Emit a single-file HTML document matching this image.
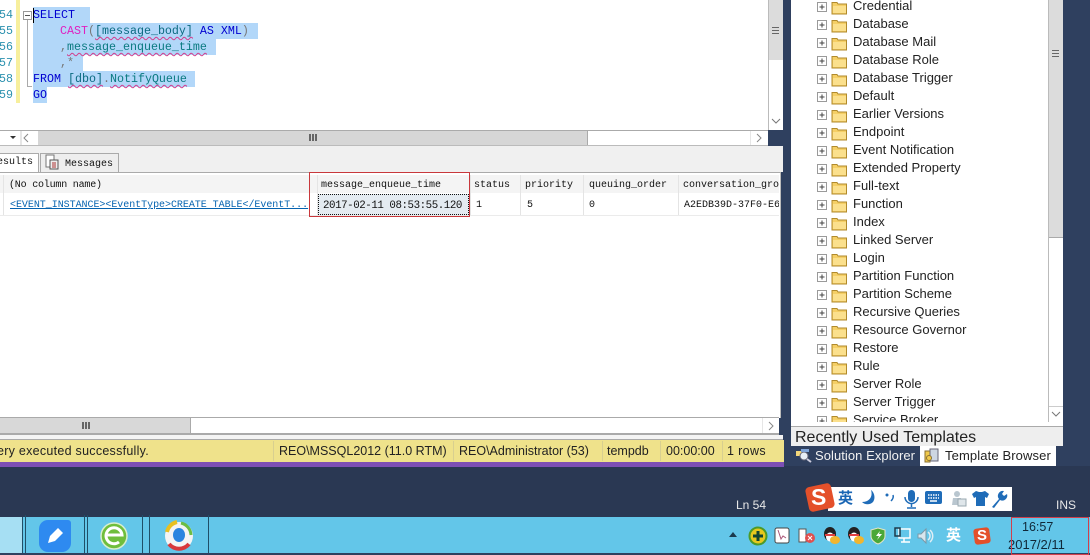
<!DOCTYPE html>
<html><head><meta charset="utf-8">
<style>
html,body{margin:0;padding:0}
body{width:1090px;height:553px;overflow:hidden;position:relative;background:#2f405f;font-family:"Liberation Sans","Noto Sans CJK SC",sans-serif}
.a{position:absolute}
.t{position:absolute;white-space:pre}
.m{font-family:"Liberation Mono",monospace;font-size:11.67px;line-height:16px}
.g{font-family:"Liberation Mono",monospace;font-size:10px;line-height:14px;color:#111}
.sel{position:absolute;background:#b2d7f9}
.r{position:absolute;left:817px;height:18px;width:225px}
.r svg{position:absolute;left:0;top:0}
.r span{position:absolute;left:36px;top:-2px;font-size:13px;line-height:18px;color:#222;white-space:pre}
.st{position:absolute;top:443px;font-size:12.5px;line-height:16px;color:#222;white-space:pre}
.sep{position:absolute;top:441px;width:1px;height:20px;background:#d8cf90}
.wav{text-decoration:underline wavy #d23c8c 1px;text-underline-offset:2px}
</style></head><body>
<svg width="0" height="0" style="position:absolute"><defs>
<g id="f"><rect x="0.5" y="3.5" width="9" height="9" fill="#fff" stroke="#9a9a9a"/><path d="M2.5 8h5M5 5.500v5" stroke="#444"/><path d="M15 3.500h5l1 1.500h8.500v10h-14.500z" fill="#f5cf66" stroke="#b08a2c"/><path d="M16 7h13v7h-13z" fill="#fbe08d"/></g>
</defs></svg>

<!-- gradient background -->
<div class="a" style="left:0;top:466px;width:1090px;height:51px;background:#2a3853"></div>

<!-- editor -->
<div class="a" style="left:0;top:0;width:768px;height:130px;background:#fff"></div>
<div class="a" style="left:16px;top:0;width:4px;height:103px;background:#f7ef9d"></div>
<div class="t m" style="left:-1px;top:7px;color:#2b91af;line-height:16px">54
55
56
57
58
59</div>
<div class="a" style="left:23px;top:11px;width:7px;height:7px;border:1px solid #999;background:#fff"></div>
<div class="a" style="left:25px;top:15px;width:5px;height:1px;background:#555"></div>
<div class="a" style="left:27px;top:20px;width:4px;height:66px;border-left:1px solid #aaa;border-bottom:1px solid #aaa"></div>
<div class="sel" style="left:33px;top:7px;width:57px;height:16px"></div>
<div class="sel" style="left:33px;top:23px;width:225px;height:16px"></div>
<div class="sel" style="left:33px;top:39px;width:183px;height:16px"></div>
<div class="sel" style="left:33px;top:55px;width:50px;height:16px"></div>
<div class="sel" style="left:33px;top:71px;width:162px;height:16px"></div>
<div class="sel" style="left:33px;top:87px;width:14px;height:16px"></div>
<div class="a" style="left:33px;top:8px;width:1px;height:15px;background:#000"></div>
<div class="t m" style="left:33px;top:7px;color:#0000d0">SELECT</div>
<div class="t m" style="left:60px;top:23px;color:#777"><span style="color:#e020c0">CAST</span>(<span class="wav" style="color:#0a6a80">[message_body]</span> <span style="color:#0000d0">AS XML</span>)</div>
<div class="t m" style="left:60px;top:39px;color:#777">,<span class="wav" style="color:#0a7a80">message_enqueue_time</span></div>
<div class="t m" style="left:60px;top:55px;color:#777">,*</div>
<div class="t m" style="left:33px;top:71px;color:#777"><span style="color:#0000d0">FROM</span> <span class="wav" style="color:#0a6a80">[dbo]</span>.<span class="wav" style="color:#0a7a80">NotifyQueue</span></div>
<div class="t m" style="left:33px;top:87px;color:#0000d0">GO</div>

<!-- editor v scrollbar -->
<div class="a" style="left:768px;top:0;width:15px;height:130px;background:#fff;border-left:1px solid #bbb;box-sizing:border-box"></div>
<div class="a" style="left:769px;top:0;width:14px;height:60px;background:#dcdcdc"></div>
<div class="a" style="left:772px;top:27px;width:7px;height:7px;border-top:1px solid #666;border-bottom:1px solid #666;box-sizing:border-box"></div>
<div class="a" style="left:772px;top:30px;width:7px;height:1px;background:#666"></div>
<svg class="a" style="left:769px;top:113px" width="14" height="16"><path d="M3 6l4 4 4-4" fill="none" stroke="#777"/></svg>

<!-- editor h scrollbar -->
<div class="a" style="left:0;top:130px;width:768px;height:16px;background:#fff;border-top:1px solid #aaa;border-bottom:1px solid #bbb;box-sizing:border-box"></div>
<div class="a" style="left:38px;top:131px;width:549px;height:14px;background:#d6d6d6;border-right:1px solid #aaa"></div>
<div class="a" style="left:309px;top:134px;width:8px;height:7px;background:repeating-linear-gradient(90deg,#666 0 2px,#d6d6d6 2px 3px)"></div>
<svg class="a" style="left:10px;top:131px" width="26" height="14"><path d="M0 5h6l-3 3z" fill="#333"/><path d="M18 3l-4 4 4 4" fill="none" stroke="#888"/><path d="M11 0v14" stroke="#ccc"/></svg>
<svg class="a" style="left:750px;top:131px" width="17" height="14"><path d="M0 0v14" stroke="#ccc"/><path d="M7 3l4 4-4 4" fill="none" stroke="#888"/></svg>

<!-- results toolbar band -->
<div class="a" style="left:0;top:146px;width:783px;height:26px;background:#f0f0f0"></div>
<div class="a" style="left:0;top:153px;width:39px;height:20px;background:#fff;border:1px solid #aaa;border-bottom:none;border-left:none;box-sizing:border-box"></div>
<div class="t g" style="left:-3px;top:156px;font-size:10px;color:#111">esults</div>
<div class="a" style="left:40px;top:153px;width:79px;height:19px;background:#eee;border:1px solid #aaa;border-bottom:none;box-sizing:border-box"></div>
<svg class="a" style="left:44px;top:154px" width="16" height="16"><path d="M2 1h8v12h-8z" fill="#fff" stroke="#777"/><path d="M6 6h8v9h-8z" fill="#eee" stroke="#555"/><path d="M8 9h4M8 11h4M8 13h4" stroke="#a33"/></svg>
<div class="t g" style="left:65px;top:158px">Messages</div>

<!-- grid -->
<div class="a" style="left:0;top:172px;width:781px;height:246px;background:#fff;border-top:1px solid #aaa;border-right:1px solid #bbb;box-sizing:border-box"></div>
<div class="a" style="left:0;top:175px;width:779px;height:18px;background:#f4f4f4"></div>
<div class="a" style="left:0;top:215px;width:779px;height:1px;background:#ebebeb"></div>
<div class="a" style="left:3px;top:175px;width:1px;height:40px;background:#e4e4e4"></div>
<div class="a" style="left:317px;top:175px;width:1px;height:40px;background:#e4e4e4"></div>
<div class="a" style="left:470px;top:175px;width:1px;height:40px;background:#e4e4e4"></div>
<div class="a" style="left:520px;top:175px;width:1px;height:40px;background:#e4e4e4"></div>
<div class="a" style="left:583px;top:175px;width:1px;height:40px;background:#e4e4e4"></div>
<div class="a" style="left:678px;top:175px;width:1px;height:40px;background:#e4e4e4"></div>
<div class="t g" style="left:9px;top:179px;letter-spacing:-.2px">(No column name)</div>
<div class="t g" style="left:321px;top:179px">message_enqueue_time</div>
<div class="t g" style="left:474px;top:179px">status</div>
<div class="t g" style="left:525px;top:179px">priority</div>
<div class="t g" style="left:589px;top:179px">queuing_order</div>
<div class="a" style="left:683px;top:179px;width:96px;height:14px;overflow:hidden"><span class="t g" style="left:0;top:0">conversation_group</span></div>
<div class="a" style="left:318px;top:194px;width:151px;height:21px;background:#e4ebf1;border:1px dotted #111;box-sizing:border-box"></div>
<div class="t g" style="left:10px;top:199px;color:#0563b0;text-decoration:underline;letter-spacing:-.04px">&lt;EVENT_INSTANCE&gt;&lt;EventType&gt;CREATE TABLE&lt;/EventT...</div>
<div class="t g" style="left:323px;top:199px;font-size:10.8px;letter-spacing:-.44px">2017-02-11 08:53:55.120</div>
<div class="t g" style="left:476px;top:199px">1</div>
<div class="t g" style="left:527px;top:199px">5</div>
<div class="t g" style="left:589px;top:199px">0</div>
<div class="a" style="left:684px;top:199px;width:95px;height:14px;overflow:hidden"><span class="t g" style="left:0;top:0">A2EDB39D-37F0-E611</span></div>
<div class="a" style="left:309px;top:172px;width:161px;height:45px;border:1px solid #c8383c;box-sizing:border-box"></div>

<!-- grid h scrollbar -->
<div class="a" style="left:0;top:417px;width:779px;height:18px;background:#fff;border-top:1px solid #aaa;border-bottom:2px solid #aaa;box-sizing:border-box"></div>
<div class="a" style="left:0;top:418px;width:190px;height:15px;background:#d8d8d8;border-right:1px solid #aaa"></div>
<div class="a" style="left:82px;top:422px;width:8px;height:7px;background:repeating-linear-gradient(90deg,#666 0 2px,#d8d8d8 2px 3px)"></div>
<svg class="a" style="left:762px;top:418px" width="16" height="15"><path d="M0 0v15" stroke="#ccc"/><path d="M7 4l4 4-4 4" fill="none" stroke="#888"/></svg>
<div class="a" style="left:0;top:435px;width:783px;height:5px;background:#f4f4f4;border-bottom:1px solid #aaa;box-sizing:border-box"></div>

<!-- status bar -->
<div class="a" style="left:0;top:440px;width:784px;height:22px;background:#efe28b"></div>
<div class="a" style="left:0;top:462px;width:784px;height:5px;background:#7d4fb4"></div>
<div class="st" style="left:-3px;letter-spacing:.27px">ery executed successfully.</div>
<div class="sep" style="left:273px"></div>
<div class="st" style="left:279px">REO\MSSQL2012 (11.0 RTM)</div>
<div class="sep" style="left:453px"></div>
<div class="st" style="left:459px">REO\Administrator (53)</div>
<div class="sep" style="left:602px"></div>
<div class="st" style="left:607px">tempdb</div>
<div class="sep" style="left:660px"></div>
<div class="st" style="left:666px">00:00:00</div>
<div class="sep" style="left:722px"></div>
<div class="st" style="left:727px;letter-spacing:.35px">1 rows</div>

<!-- right panel -->
<div class="a" style="left:791px;top:0;width:257px;height:422px;background:#fff"></div>
<div class="r" style="top:-1px"><svg width="32" height="18"><use href="#f"/></svg><span>Credential</span></div>
<div class="r" style="top:17px"><svg width="32" height="18"><use href="#f"/></svg><span>Database</span></div>
<div class="r" style="top:35px"><svg width="32" height="18"><use href="#f"/></svg><span>Database Mail</span></div>
<div class="r" style="top:53px"><svg width="32" height="18"><use href="#f"/></svg><span>Database Role</span></div>
<div class="r" style="top:71px"><svg width="32" height="18"><use href="#f"/></svg><span>Database Trigger</span></div>
<div class="r" style="top:89px"><svg width="32" height="18"><use href="#f"/></svg><span>Default</span></div>
<div class="r" style="top:107px"><svg width="32" height="18"><use href="#f"/></svg><span>Earlier Versions</span></div>
<div class="r" style="top:125px"><svg width="32" height="18"><use href="#f"/></svg><span>Endpoint</span></div>
<div class="r" style="top:143px"><svg width="32" height="18"><use href="#f"/></svg><span>Event Notification</span></div>
<div class="r" style="top:161px"><svg width="32" height="18"><use href="#f"/></svg><span>Extended Property</span></div>
<div class="r" style="top:179px"><svg width="32" height="18"><use href="#f"/></svg><span>Full-text</span></div>
<div class="r" style="top:197px"><svg width="32" height="18"><use href="#f"/></svg><span>Function</span></div>
<div class="r" style="top:215px"><svg width="32" height="18"><use href="#f"/></svg><span>Index</span></div>
<div class="r" style="top:233px"><svg width="32" height="18"><use href="#f"/></svg><span>Linked Server</span></div>
<div class="r" style="top:251px"><svg width="32" height="18"><use href="#f"/></svg><span>Login</span></div>
<div class="r" style="top:269px"><svg width="32" height="18"><use href="#f"/></svg><span>Partition Function</span></div>
<div class="r" style="top:287px"><svg width="32" height="18"><use href="#f"/></svg><span>Partition Scheme</span></div>
<div class="r" style="top:305px"><svg width="32" height="18"><use href="#f"/></svg><span>Recursive Queries</span></div>
<div class="r" style="top:323px"><svg width="32" height="18"><use href="#f"/></svg><span>Resource Governor</span></div>
<div class="r" style="top:341px"><svg width="32" height="18"><use href="#f"/></svg><span>Restore</span></div>
<div class="r" style="top:359px"><svg width="32" height="18"><use href="#f"/></svg><span>Rule</span></div>
<div class="r" style="top:377px"><svg width="32" height="18"><use href="#f"/></svg><span>Server Role</span></div>
<div class="r" style="top:395px"><svg width="32" height="18"><use href="#f"/></svg><span>Server Trigger</span></div>
<div class="a" style="left:817px;top:413px;width:225px;height:9px;overflow:hidden"><div class="r" style="left:0;top:0"><svg width="32" height="18"><use href="#f"/></svg><span>Service Broker</span></div></div>

<div class="a" style="left:1048px;top:0;width:15px;height:422px;background:#fff;border-left:1px solid #bbb;box-sizing:border-box"></div>
<div class="a" style="left:1049px;top:0;width:14px;height:238px;background:#dcdcdc;border-bottom:1px solid #aaa;box-sizing:border-box"></div>
<div class="a" style="left:1052px;top:50px;width:7px;height:7px;border-top:1px solid #666;border-bottom:1px solid #666;box-sizing:border-box"></div>
<div class="a" style="left:1052px;top:53px;width:7px;height:1px;background:#666"></div>
<svg class="a" style="left:1049px;top:406px" width="14" height="16"><path d="M0 0.500h14" stroke="#ccc"/><path d="M3 6l4 4 4-4" fill="none" stroke="#777"/></svg>
<div class="a" style="left:791px;top:422px;width:272px;height:5px;background:#fff"></div>
<div class="a" style="left:791px;top:426px;width:272px;height:20px;background:#eeeeee;border-top:1px solid #aaa;box-sizing:border-box"></div>
<div class="t" style="left:795px;top:429px;font-size:16px;line-height:18px;color:#222">Recently Used Templates</div>

<!-- bottom tabs -->
<svg class="a" style="left:795px;top:448px" width="17" height="16"><path d="M1 3h6v5H1z" fill="#f3d77b"/><circle cx="9" cy="8" r="4" fill="#e8eef5" stroke="#667"/><path d="M12 11l4 3" stroke="#ccd" stroke-width="2"/><path d="M6 1h8v3H6z" fill="#7fa4d8"/></svg>
<div class="t" style="left:815px;top:447px;font-size:13px;line-height:17px;color:#f2f2f2;letter-spacing:.06px">Solution Explorer</div>
<div class="a" style="left:920px;top:446px;width:136px;height:20px;background:#fff"></div>
<svg class="a" style="left:924px;top:448px" width="16" height="16"><path d="M1 3h5v11H1z" fill="#f0c94a" stroke="#8a7030"/><path d="M6 1h8v12H6z" fill="#cdd6e2" stroke="#667"/><circle cx="5" cy="10" r="2.500" fill="#f0c94a" stroke="#8a7030"/></svg>
<div class="t" style="left:945px;top:447px;font-size:13px;line-height:17px;color:#222;letter-spacing:.12px">Template Browser</div>

<!-- bottom row text -->
<div class="t" style="left:736px;top:497px;font-size:12px;line-height:16px;color:#e8e8e8">Ln 54</div>
<div class="t" style="left:1056px;top:497px;font-size:12px;line-height:16px;color:#e8e8e8">INS</div>

<!-- sogou bar -->
<div class="a" style="left:828px;top:487px;width:184px;height:24px;background:#fff"></div>
<div class="a" style="left:807px;top:485px;width:26px;height:25px;background:#e4502a;border-radius:4px;transform:rotate(-12deg)"></div>
<div class="t" style="left:811px;top:484px;font-size:23px;line-height:26px;font-weight:bold;color:#fff">S</div>
<div class="t" style="left:838px;top:490px;font-size:15px;line-height:18px;font-weight:bold;color:#1a66b4">英</div>
<svg class="a" style="left:858px;top:488px" width="150" height="22" fill="#1f6cb8">
<path d="M13 2c2 6-1 12-9 12 3 3 8 3 11 0 3-4 1-10-2-12z"/>
<circle cx="29" cy="7" r="1.500"/><path d="M35 7c1 3-1 5-2 6" stroke="#1f6cb8" fill="none" stroke-width="1.500"/>
<rect x="50" y="2" width="7" height="12" rx="3.500"/><path d="M47 9a6.500 6.500 0 0 0 13 0M53.500 15v4M49 20h9" fill="none" stroke="#1f6cb8" stroke-width="1.500"/>
<rect x="67" y="3" width="17" height="13" rx="2"/><path d="M70 7h11M70 10h11" stroke="#fff" stroke-width="1.500" stroke-dasharray="1.500 1"/><path d="M72 13h7" stroke="#fff" stroke-width="1.500"/>
<circle cx="99" cy="6" r="3" fill="#b9c6cf"/><path d="M94 17l1-7h8v7z" fill="#b9c6cf"/><rect x="100" y="11" width="8" height="7" fill="#dfe6ea" stroke="#9aa8b0"/>
<path d="M114 6l4-3 3 1h3l3-1 4 3-2 4-2-1v9h-9V9l-2 1z"/>
<path d="M134 19l7-8a5 5 0 0 1 5-8l-2 3 2 2 3-2a5 5 0 0 1-7 6l-6 8z"/>
</svg>

<!-- taskbar -->
<div class="a" style="left:0;top:517px;width:1090px;height:36px;background:#63c6e9"></div>
<div class="a" style="left:0;top:517px;width:22px;height:36px;background:#a6dff3;border-right:1px solid #1f4f68"></div>
<div class="a" style="left:25px;top:515px;width:60px;height:38px;border-left:1px solid #1f4f68;border-right:1px solid #1f4f68;box-sizing:border-box"></div>
<div class="a" style="left:87px;top:515px;width:56px;height:38px;border-left:1px solid #1f4f68;border-right:1px solid #1f4f68;box-sizing:border-box"></div>
<div class="a" style="left:149px;top:515px;width:60px;height:38px;border-left:1px solid #1f4f68;border-right:1px solid #1f4f68;box-sizing:border-box"></div>
<div class="a" style="left:39px;top:520px;width:32px;height:32px;background:#2e8af0;border-radius:9px 3px 9px 9px"></div>
<svg class="a" style="left:46px;top:526px" width="20" height="20"><path d="M2 17l2-7 8-8 5 5-8 8z" fill="#fff"/></svg>
<svg class="a" style="left:99px;top:520px" width="32" height="33"><circle cx="15" cy="16" r="13" fill="#6fbe3c" stroke="#d7eecd" stroke-width="1.500"/><path d="M8 15h15a8 8 0 1 0-3 7" fill="none" stroke="#fff" stroke-width="3"/></svg>
<svg class="a" style="left:163px;top:520px" width="32" height="33"><circle cx="16" cy="16" r="14" fill="#f4f4f4"/><path d="M4 12a13 13 0 0 1 10-10" stroke="#e8c020" stroke-width="4" fill="none"/><path d="M18 3a13 13 0 0 1 10 12" stroke="#6bbd44" stroke-width="3" fill="none"/><path d="M6 24a13 13 0 0 0 20 0" stroke="#d8383c" stroke-width="4" fill="none"/><ellipse cx="16" cy="15" rx="6" ry="7" fill="#2a84e0"/></svg>

<!-- tray -->
<svg class="a" style="left:728px;top:530px" width="10" height="8"><path d="M1 7l4-5 4 5z" fill="#1b3a4e"/></svg>
<svg class="a" style="left:748px;top:526px" width="20" height="20"><circle cx="10" cy="10" r="8.500" fill="#e6c81e" stroke="#4c9a2a" stroke-width="2"/><path d="M10 5v10M5 10h10" stroke="#143" stroke-width="3"/></svg>
<svg class="a" style="left:774px;top:527px" width="16" height="18"><rect x="1" y="1" width="14" height="15" rx="2" fill="#fff" stroke="#444"/><path d="M4 3l3 9 2-3 3 2" fill="none" stroke="#a57"/></svg>
<svg class="a" style="left:798px;top:527px" width="18" height="18"><rect x="1" y="2" width="7" height="13" fill="#fff" stroke="#555"/><circle cx="12" cy="11" r="5" fill="#e05050"/><path d="M10 9l4 4M14 9l-4 4" stroke="#fff"/></svg>
<svg class="a" style="left:822px;top:525px" width="18" height="20"><ellipse cx="8" cy="9" rx="6" ry="7" fill="#222"/><ellipse cx="8" cy="12" rx="4" ry="4.500" fill="#fff"/><path d="M3 10h10" stroke="#e04040" stroke-width="2"/><ellipse cx="13" cy="15" rx="5" ry="4" fill="#f2b52e"/></svg>
<svg class="a" style="left:846px;top:525px" width="18" height="20"><ellipse cx="8" cy="9" rx="6" ry="7" fill="#222"/><ellipse cx="8" cy="12" rx="4" ry="4.500" fill="#fff"/><path d="M3 10h10" stroke="#e04040" stroke-width="2"/><ellipse cx="13" cy="15" rx="5" ry="4" fill="#f2b52e"/></svg>
<svg class="a" style="left:870px;top:527px" width="16" height="18"><path d="M8 1l7 2v6c0 4-4 7-7 8-3-1-7-4-7-8V3z" fill="#4aa838" stroke="#e4e4c8"/><path d="M10 4l-4 5h3l-2 4 5-6H9z" fill="#fff"/></svg>
<svg class="a" style="left:894px;top:527px" width="18" height="18" fill="none" stroke="#fff" stroke-width="1.500"><rect x="5" y="2" width="11" height="9"/><rect x="1" y="1" width="5" height="8" stroke="#1e3a4a"/><path d="M7 15h9M10 11v4"/></svg>
<svg class="a" style="left:917px;top:527px" width="18" height="18"><path d="M1 7h3l5-5v14l-5-5H1z" fill="#d8e6ee" stroke="#7a99a8"/><path d="M11 5a5 5 0 0 1 0 8M13 3a8 8 0 0 1 0 12" fill="none" stroke="#dfeef5" stroke-width="1.500"/></svg>
<div class="t" style="left:946px;top:527px;font-size:15px;line-height:18px;font-weight:bold;color:#fff">英</div>
<div class="a" style="left:974px;top:528px;width:16px;height:16px;background:#e4502a;border-radius:3px;transform:rotate(-8deg)"></div>
<div class="t" style="left:977px;top:527px;font-size:15px;line-height:18px;font-weight:bold;color:#fff">S</div>

<div class="t" style="left:1022px;top:520px;font-size:12.500px;line-height:15px;color:#102838">16:57</div>
<div class="t" style="left:1008px;top:537px;font-size:13px;line-height:16px;color:#102838">2017/2/11</div>
<div class="a" style="left:1011px;top:517px;width:78px;height:38px;border:1px solid #d0404c;box-sizing:border-box"></div>
</body></html>
